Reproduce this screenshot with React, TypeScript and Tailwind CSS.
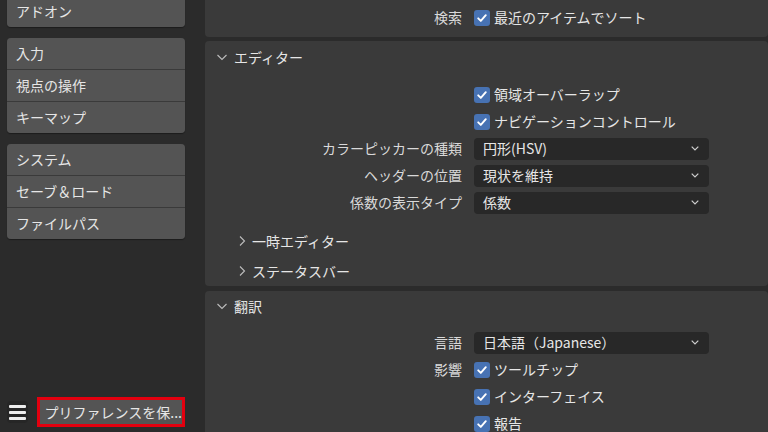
import React from "react";

const font = { fontFamily: '"Noto Sans CJK JP", "Noto Sans", sans-serif' };

function Check() {
  return (
    <span className="flex h-[16px] w-[16px] shrink-0 items-center justify-center rounded-[3px] bg-[#4772b3]">
      <svg width="12" height="12" viewBox="0 0 12 12">
        <polyline points="2.2,6.3 4.8,8.9 9.8,3.2" fill="none" stroke="#fff" strokeWidth="1.9" strokeLinecap="round" strokeLinejoin="round" />
      </svg>
    </span>
  );
}

function Chevron({ open }: { open: boolean }) {
  return (
    <svg width="10" height="10" viewBox="0 0 10 10" className="shrink-0">
      {open ? (
        <polyline points="0.5,3 5,7.5 9.5,3" fill="none" stroke="#bdbdbd" strokeWidth="1.1" />
      ) : (
        <polyline points="3,0.5 7.5,5 3,9.5" fill="none" stroke="#bdbdbd" strokeWidth="1.1" />
      )}
    </svg>
  );
}

type RowProps = { label?: string; children: React.ReactNode };

function Row({ label, children }: RowProps) {
  return (
    <div className="flex h-[27px] items-center">
      <div className="w-[257px] shrink-0 text-right text-[#d9d9d9]">{label}</div>
      <div className="ml-[12px] flex items-center">{children}</div>
    </div>
  );
}

function CheckItem({ text }: { text: string }) {
  return (
    <div className="flex items-center gap-[4px]">
      <Check />
      <span className="text-[#e6e6e6]">{text}</span>
    </div>
  );
}

function Dropdown({ value }: { value: string }) {
  return (
    <div className="flex h-[22px] w-[235px] items-center justify-between rounded-[4px] bg-[#282828] pl-[9px] pr-[10px] text-[#e6e6e6]">
      <span>{value}</span>
      <svg width="8" height="5" viewBox="0 0 8 5">
        <polyline points="0.7,0.7 4,4 7.3,0.7" fill="none" stroke="#cfcfcf" strokeWidth="1.2" />
      </svg>
    </div>
  );
}

const navGroups = [["アドオン"], ["入力", "視点の操作", "キーマップ"], ["システム", "セーブ＆ロード", "ファイルパス"]];

export default function App() {
  return (
    <div className="flex h-[432px] w-[768px] overflow-hidden bg-[#2b2b2b] text-[14px]" style={font}>
      {/* sidebar */}
      <div className="flex w-[205px] shrink-0 flex-col justify-between pl-[7px] pr-[20px]">
        <div className="mt-[-4px] flex flex-col gap-[11px]">
          {navGroups.map((group, gi) => (
            <div key={gi} className="flex flex-col overflow-hidden rounded-[4px] bg-[#3a3a3a] shadow-[0_1px_1px_rgba(0,0,0,0.35)]">
              {group.map((item, i) => (
                <div
                  key={item}
                  className={`flex h-[31px] items-center bg-[#545454] pl-[9px] text-[#e6e6e6] ${i > 0 ? "mt-[1px]" : ""}`}
                >
                  {item}
                </div>
              ))}
            </div>
          ))}
        </div>
        <div className="mb-[5px] flex items-center gap-[9px]">
          <div className="flex h-[22px] w-[22px] flex-col items-center justify-center gap-[3px] rounded-[4px] bg-[#262626]">
            <span className="h-[3px] w-[17px] rounded-[1px] bg-[#eeeeee]" />
            <span className="h-[3px] w-[17px] rounded-[1px] bg-[#eeeeee]" />
            <span className="h-[3px] w-[17px] rounded-[1px] bg-[#eeeeee]" />
          </div>
          <div className="flex h-[30px] w-[152px] items-center border-[3px] border-[#e3000f] bg-[#545454]">
            <div className="flex h-full w-full items-center overflow-hidden whitespace-nowrap pl-[5px] text-[#e6e6e6]">
              プリファレンスを保...
            </div>
          </div>
        </div>
      </div>

      {/* main */}
      <div className="flex flex-1 flex-col gap-[4px]">
        <div className="h-[37px] shrink-0 rounded-b-[4px] bg-[#3a3a3a] pt-[4px]">
          <Row label="検索">
            <CheckItem text="最近のアイテムでソート" />
          </Row>
        </div>

        <div className="shrink-0 rounded-[4px] bg-[#3a3a3a]">
          <div className="flex h-[32px] items-center gap-[7px] pl-[12px] text-[#e6e6e6]">
            <Chevron open />
            <span>エディター</span>
          </div>
          <div className="pt-[8px]">
            <Row>
              <CheckItem text="領域オーバーラップ" />
            </Row>
            <Row>
              <CheckItem text="ナビゲーションコントロール" />
            </Row>
            <Row label="カラーピッカーの種類">
              <Dropdown value="円形(HSV)" />
            </Row>
            <Row label="ヘッダーの位置">
              <Dropdown value="現状を維持" />
            </Row>
            <Row label="係数の表示タイプ">
              <Dropdown value="係数" />
            </Row>
          </div>
          <div className="mt-[10px]">
            {["一時エディター", "ステータスバー"].map((t) => (
              <div key={t} className="flex h-[30px] items-center gap-[5px] pl-[32px] text-[#e6e6e6]">
                <Chevron open={false} />
                <span>{t}</span>
              </div>
            ))}
          </div>
        </div>

        <div className="mt-[1px] flex-1 rounded-t-[4px] bg-[#3a3a3a]">
          <div className="flex h-[30px] items-center gap-[7px] pl-[12px] text-[#e6e6e6]">
            <Chevron open />
            <span>翻訳</span>
          </div>
          <div className="pt-[8px]">
            <Row label="言語">
              <Dropdown value="日本語（Japanese）" />
            </Row>
            <Row label="影響">
              <CheckItem text="ツールチップ" />
            </Row>
            <Row>
              <CheckItem text="インターフェイス" />
            </Row>
            <Row>
              <CheckItem text="報告" />
            </Row>
          </div>
        </div>
      </div>
    </div>
  );
}
